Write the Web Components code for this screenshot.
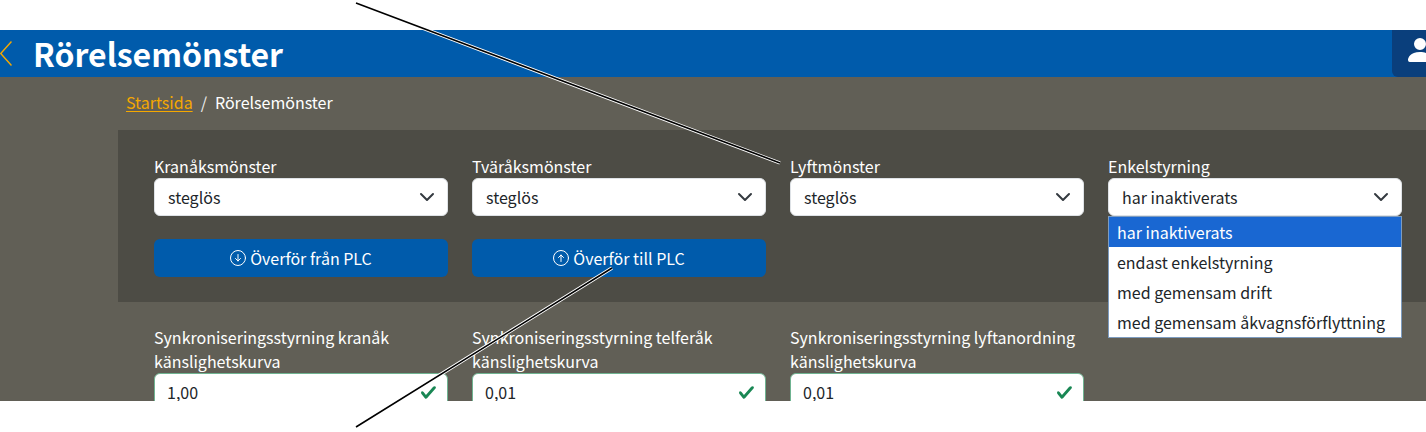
<!DOCTYPE html>
<html lang="sv"><head><meta charset="utf-8"><title>Rörelsemönster</title>
<style>
html,body{margin:0;padding:0;background:#fff;}
body{font:16px/24px "Noto Sans CJK SC","Noto Sans",sans-serif;color:#212529;height:432px;overflow:hidden;position:relative;}
</style></head><body>
<template id="t-frame"><style>
:host{display:block;margin-top:30px;height:371px;overflow:hidden;background:#615f56;}
</style><slot></slot></template>

<template id="t-header"><style>
:host{display:flex;align-items:center;height:47px;background:#005bab;color:#fff;}
svg.back{width:12px;height:25px;flex:none;margin-right:21px;}
h1{margin:0;font:400 24px/32px inherit;font-family:inherit;flex:1;white-space:nowrap;margin-top:-2px;}
.user{flex:none;width:34px;height:47px;background:#0a3f7c;border-bottom-left-radius:6px;overflow:hidden;}
.user svg{display:block;width:32px;height:32px;margin:4px 0 0 12px;fill:#fff;}
</style>
<svg class="back" viewBox="0 0 12 25"><path d="M11.5.5 .7 12.5 11.5 24.5" fill="none" stroke="#f5a800" stroke-width="1.5"/></svg>
<h1><slot></slot></h1>
<div class="user"><svg viewBox="0 0 16 16"><path d="M3 14s-1 0-1-1 1-4 6-4 6 3 6 4-1 1-1 1zm5-6a3 3 0 1 0 0-6 3 3 0 0 0 0 6"/></svg></div>
</template>

<template id="t-crumbs"><style>
:host{display:flex;align-items:center;height:53px;padding:0 0 3px 8px;box-sizing:border-box;margin-left:118px;color:#fff;white-space:nowrap;}
a{color:#f5a800;text-decoration:underline;text-underline-offset:2px;}
.sep{padding:0 8px;color:#eee;}
</style><a href="#"><slot name="home"></slot></a><span class="sep">/</span><slot></slot></template>

<template id="t-panel"><style>
:host{display:block;margin-left:118px;width:1344px;box-sizing:border-box;padding:24px 36px 25px;background:#4d4c45;}
.grid{display:grid;grid-template-columns:repeat(4,294px);column-gap:24px;row-gap:23px;}
</style><div class="grid"><slot></slot></div></template>

<template id="t-grid"><style>
:host{display:grid;grid-template-columns:repeat(4,294px);column-gap:24px;margin:23px 0 0 154px;width:1272px;align-items:end;}
</style><slot></slot></template>

<template id="t-select"><style>
:host{display:block;position:relative;color:#fff;}
label{display:block;}
.box{display:flex;align-items:center;justify-content:space-between;height:38px;box-sizing:border-box;padding:0 12px 0 13px;background:#fff;border:1px solid #dee2e6;border-radius:6px;color:#212529;}
svg{width:16px;height:16px;fill:none;stroke:#343a40;stroke-width:2;stroke-linecap:round;stroke-linejoin:round;flex:none;}
</style><label><slot name="label"></slot></label>
<div class="box"><span><slot name="value"></slot></span><svg viewBox="0 0 16 16"><path d="m2 5 6 6 6-6"/></svg></div><slot name="menu"></slot></template>

<template id="t-menu"><style>
:host{display:block;position:absolute;left:0;right:0;top:62px;z-index:2;background:#fff;border:1px solid #7d9cc0;color:#212529;}
</style><slot></slot></template>

<template id="t-option"><style>
:host{display:block;height:30px;line-height:30px;padding-left:8px;color:#212529;white-space:nowrap;}
:host([selected]){background:#1967d2;color:#fff;}
</style><slot></slot></template>

<template id="t-button"><style>
:host{display:flex;align-items:center;justify-content:center;gap:4px;height:38px;background:#005bab;border-radius:6px;color:#fff;}
svg{width:16px;height:16px;fill:none;stroke:#fff;stroke-linecap:round;stroke-linejoin:round;flex:none;}
</style><svg viewBox="0 0 16 16"><circle cx="8" cy="8" r="7.5" stroke-width="1"/><path id="a" d="" stroke-width="1"/></svg><span><slot></slot></span></template>

<template id="t-input"><style>
:host{display:block;color:#fff;}
label{display:block;}
.box{display:flex;align-items:center;justify-content:space-between;height:38px;box-sizing:border-box;padding:0 10px 0 12px;background:#fff;border:1px solid #6fb391;border-radius:6px;color:#212529;}
svg{width:17px;height:17px;fill:#198754;flex:none;}
</style><label><slot name="label"></slot></label>
<div class="box"><span><slot></slot></span><svg viewBox="0 0 8 8"><path d="M2.3 6.73.6 4.53c-.4-1.04.46-1.4 1.1-.8l1.1 1.4 3.4-3.8c.6-.63 1.6-.27 1.2.7l-4 4.6c-.43.5-.8.4-1.1.1z"/></svg></div></template>

<template id="t-leader"><style>
:host{display:block;position:absolute;left:0;top:0;width:1426px;height:432px;pointer-events:none;z-index:5;}
svg{display:block;}
</style><svg width="1426" height="432" viewBox="0 0 1426 432" fill="none" stroke-linecap="butt">
<path d="M356 3 780 163M612 268 356 427" stroke="#fff" stroke-width="3.4"/>
<rect x="0" y="0" width="1426" height="30" fill="#fff"/><rect x="0" y="401" width="1426" height="31" fill="#fff"/>
<path d="M356 3 780 163M612 268 356 427" stroke="#000" stroke-width="1.6"/></svg></template>

<app-frame>
  <app-header>Rörelsemönster</app-header>
  <app-crumbs><span slot="home">Startsida</span>Rörelsemönster</app-crumbs>
  <form-panel>
    <select-field><span slot="label">Kranåksmönster</span><span slot="value">steglös</span></select-field>
    <select-field><span slot="label">Tväråksmönster</span><span slot="value">steglös</span></select-field>
    <select-field><span slot="label">Lyftmönster</span><span slot="value">steglös</span></select-field>
    <select-field><span slot="label">Enkelstyrning</span><span slot="value">har inaktiverats</span>
      <option-menu slot="menu">
        <option-row selected>har inaktiverats</option-row>
        <option-row>endast enkelstyrning</option-row>
        <option-row>med gemensam drift</option-row>
        <option-row>med gemensam åkvagnsförflyttning</option-row>
      </option-menu>
    </select-field>
    <plc-button dir="down">Överför från PLC</plc-button>
    <plc-button dir="up">Överför till PLC</plc-button>
  </form-panel>
  <field-grid>
    <input-field><span slot="label">Synkroniseringsstyrning kranåk känslighetskurva</span>1,00</input-field>
    <input-field><span slot="label">Synkroniseringsstyrning telferåk känslighetskurva</span>0,01</input-field>
    <input-field><span slot="label">Synkroniseringsstyrning lyftanordning känslighetskurva</span>0,01</input-field>
  </field-grid>
</app-frame>
<leader-lines></leader-lines>
<script>
const reg=(name,id,init)=>customElements.define(name,class extends HTMLElement{
  constructor(){super();const r=this.attachShadow({mode:'open'});r.appendChild(document.getElementById(id).content.cloneNode(true));}
  connectedCallback(){if(init)init(this);}
});
reg('app-frame','t-frame');
reg('app-header','t-header');
reg('app-crumbs','t-crumbs');
reg('form-panel','t-panel');
reg('field-grid','t-grid');
reg('select-field','t-select');
reg('option-menu','t-menu');
reg('option-row','t-option');
reg('input-field','t-input');
reg('leader-lines','t-leader');
reg('plc-button','t-button',el=>{
  el.shadowRoot.getElementById('a').setAttribute('d',el.getAttribute('dir')==='up'?'M8 11.5V5M5.5 7.5 8 5l2.5 2.5':'M8 4.5V11M5.5 8.5 8 11l2.5-2.5');
});
</script>
</body></html>
